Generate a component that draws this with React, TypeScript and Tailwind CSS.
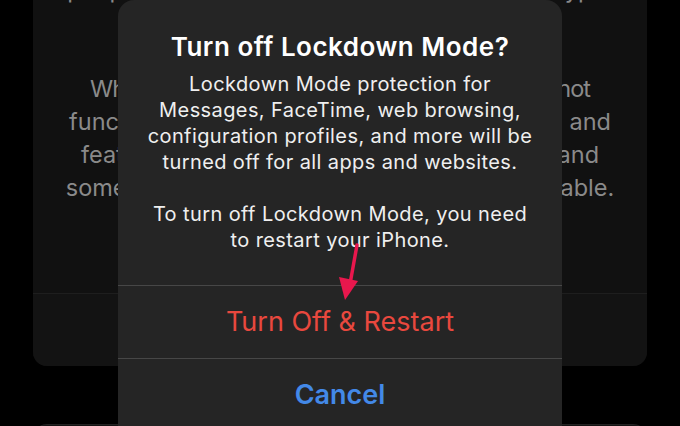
import React from "react";

export default function App() {
  const font = { fontFamily: "Inter, 'Noto Sans', sans-serif" };
  return (
    <div className="relative w-[680px] h-[426px] overflow-hidden bg-black" style={font}>
      {/* background sheet */}
      <div className="flex flex-col px-[33px]">
        <div className="mt-[-27px] flex flex-col rounded-b-[14px] bg-[#111111]">
          <div className="h-[320px] flex flex-col items-center text-[23.5px] leading-[33px] text-[#8a8a8a] whitespace-nowrap">
            <div>people are never targeted by attacks of this type.</div>
            <div className="mt-[66px] tracking-[-1px]">When Lockdown Mode is on, your iPhone will not</div>
            <div>function as it typically does. Apps, websites, and</div>
            <div>features will be strictly limited for security, and</div>
            <div>some experiences will be completely unavailable.</div>
          </div>
          <div className="h-[73px] border-t border-[#1e1e1e] rounded-b-[14px] bg-[#131313]" />
        </div>
        <div className="mt-[58px] h-[40px] rounded-t-[14px] bg-[#141414] border-t border-[#222222]" />
      </div>

      {/* alert dialog */}
      <div className="absolute left-[118px] top-0 w-[444px] h-[460px] rounded-[16px] bg-[#252525] flex flex-col">
        <div className="pt-[32px] pb-[32px] flex flex-col items-center text-center">
          <div className="text-[26px] leading-[30px] font-semibold text-white tracking-[0.5px]">
            Turn off Lockdown Mode?
          </div>
          <div className="mt-[9px] text-[20px] leading-[26px] text-[#efefef] tracking-[0.4px]">
            <div>Lockdown Mode protection for</div>
            <div>Messages, FaceTime, web browsing,</div>
            <div>configuration profiles, and more will be</div>
            <div>turned off for all apps and websites.</div>
            <div className="mt-[26px]">To turn off Lockdown Mode, you need</div>
            <div>to restart your iPhone.</div>
          </div>
        </div>
        <div className="h-[73px] border-t border-[#474747] flex items-center justify-center text-[27px] text-[#e9483e]">
          Turn Off &amp; Restart
        </div>
        <div className="h-[73px] border-t border-[#474747] flex items-center justify-center text-[27px] font-semibold text-[#4389e8]">
          Cancel
        </div>
      </div>

      {/* annotation arrow */}
      <svg className="absolute left-[330px] top-[240px]" width="40" height="64" viewBox="0 0 40 64">
        <path d="M27 5 L20 44" stroke="#e8174d" strokeWidth="3.5" strokeLinecap="round" fill="none" />
        <path d="M9 37 L28 41 L15 60 Z" fill="#e8174d" />
      </svg>
    </div>
  );
}
